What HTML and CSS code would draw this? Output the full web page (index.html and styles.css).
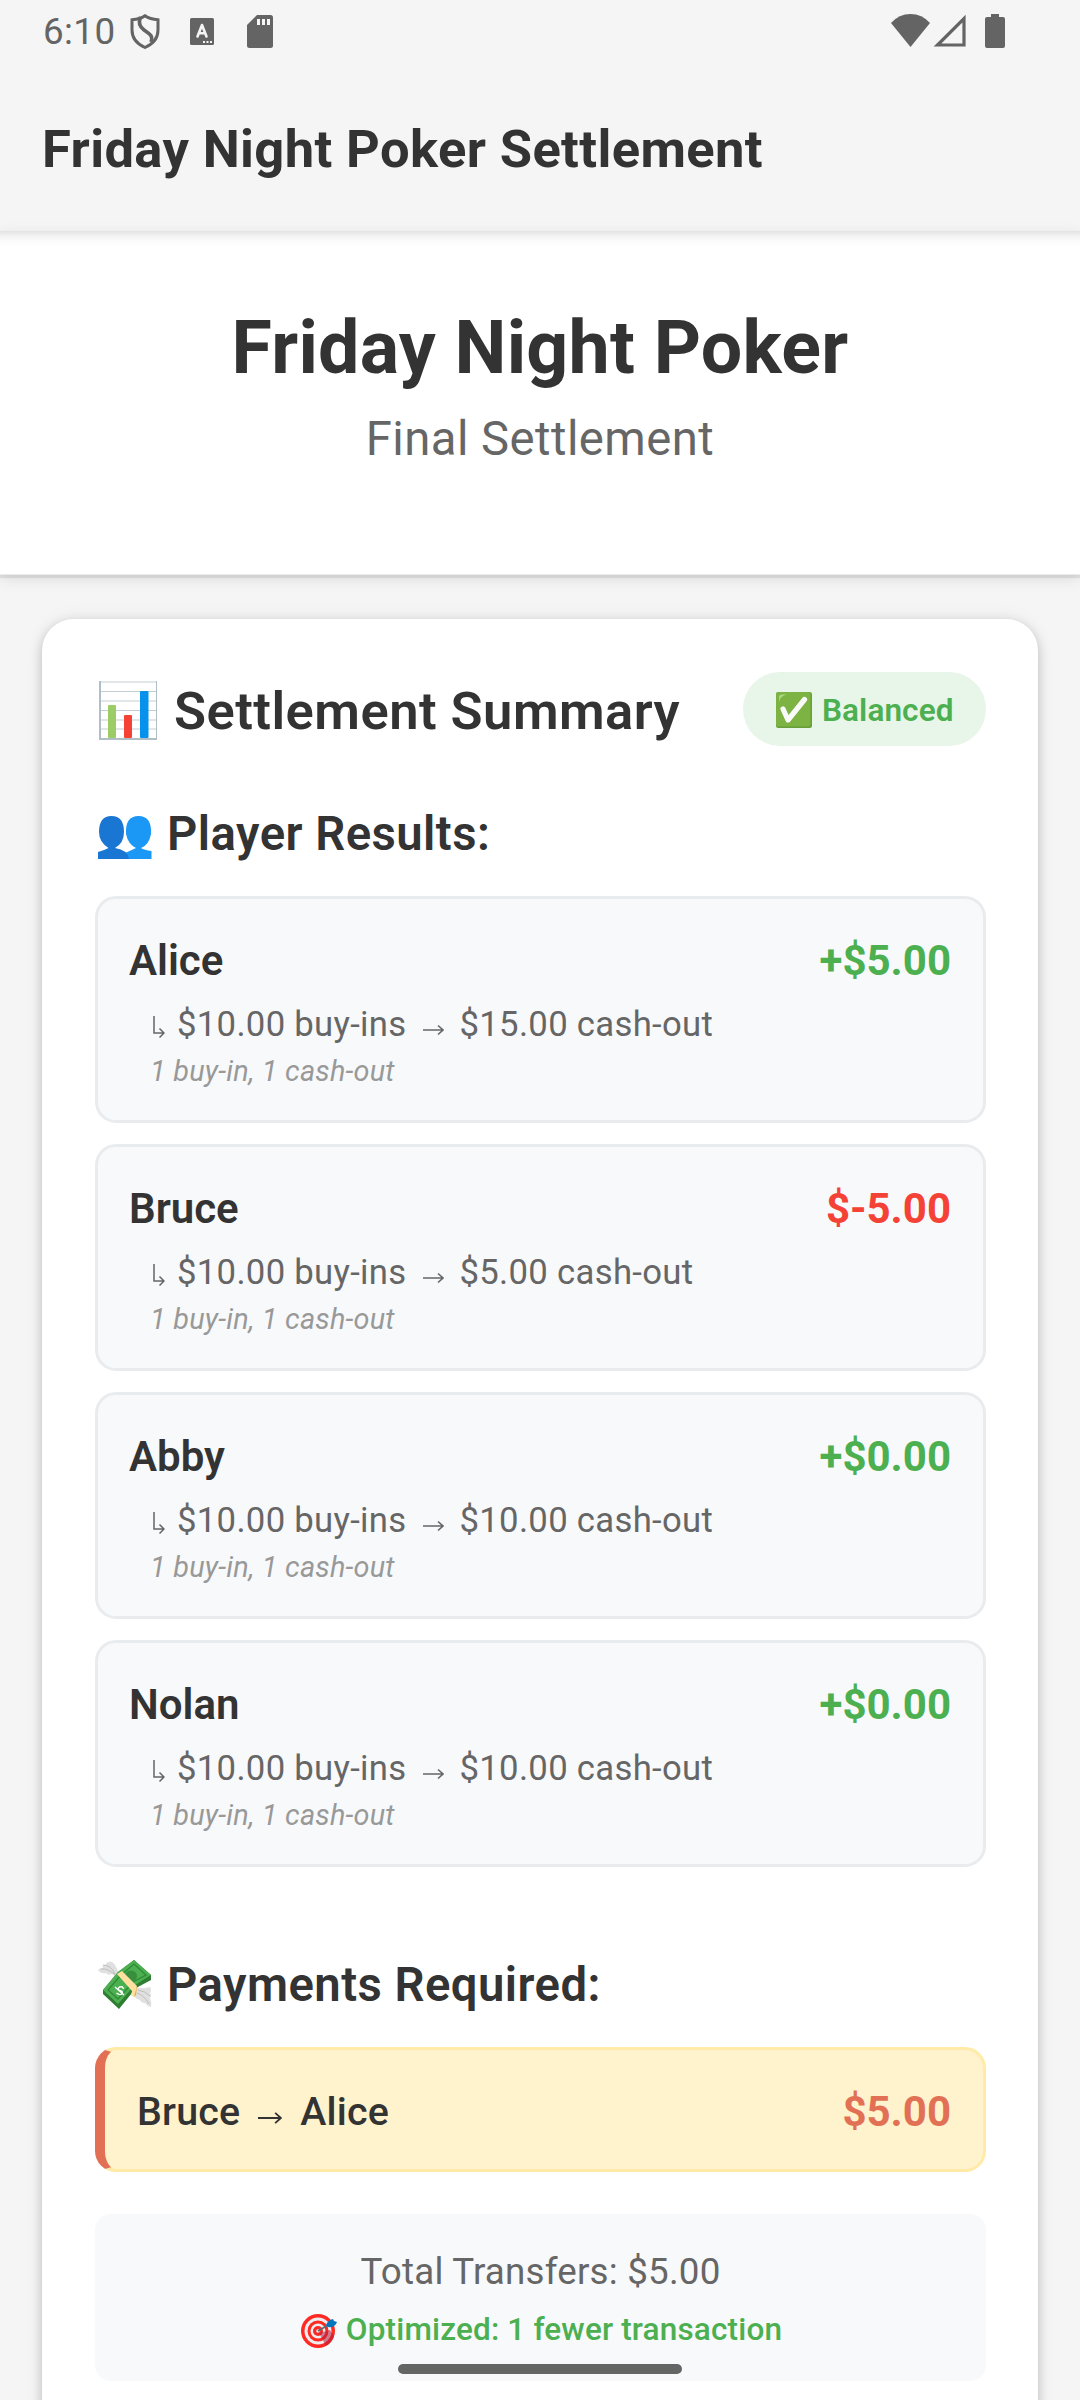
FILE: index.html
```html
<!DOCTYPE html>
<html lang="en">
<head>
<meta charset="utf-8">
<title>Friday Night Poker Settlement</title>
<link rel="stylesheet" href="styles.css">
</head>
<body>
<svg class="defs" width="0" height="0" aria-hidden="true">
  <symbol id="arrow" viewBox="0 0 21 12"><path d="M0 6H20M15 1.500L20 6L15 10.500" fill="none" stroke="currentColor" stroke-width="1.600"/></symbol>
  <symbol id="sub" viewBox="0 0 12 22"><path d="M1 0V17H10M6.5 12.5L11 17L6.5 21.5" fill="none" stroke="currentColor" stroke-width="1.5"/></symbol>
</svg>

<header class="statusbar">
  <span class="clock">6:10</span>
  <svg class="ic-shield" viewBox="0 0 30 36"><path d="M15 1.800C11 4.600 6.500 5.500 2 5.800V16C2 24 7 30 15 33.500C23 30 28 24 28 16V5.800C23.500 5.500 19 4.600 15 1.800Z" fill="none" stroke="#646464" stroke-width="3"/><path d="M10.500 3C8 9 10 13 14 16C19 19.500 23.500 21 21 28" fill="none" stroke="#646464" stroke-width="3.600"/></svg>
  <svg class="ic-a" viewBox="0 0 24 27"><rect width="24" height="27" rx="1.500" fill="#646464"/><path d="M7.500 18.500L12 7L16.500 18.500M9 15.300H15" fill="none" stroke="#f5f5f5" stroke-width="2.600" stroke-linecap="round" stroke-linejoin="round"/><path d="M13 23h2v2h-2zM16.500 23h2v2h-2zM20 23h2v2h-2z" fill="#f5f5f5"/></svg>
  <svg class="ic-sd" viewBox="0 0 26 33"><path d="M10 0H23.500Q26 0 26 2.500V30.500Q26 33 23.500 33H2.500Q0 33 0 30.500V10Z" fill="#646464"/><path d="M10 4h3v6h-3zM15 4h3v6h-3zM20 4h3v6h-3z" fill="#f5f5f5"/></svg>
  <svg class="ic-wifi" viewBox="0 0 39 33"><path d="M0 9Q8 0 19.500 0T39 9L19.500 33Z" fill="#646464"/></svg>
  <svg class="ic-signal" viewBox="0 0 33 33"><path d="M4.500 31H31V4.500Z" fill="none" stroke="#646464" stroke-width="3.200"/></svg>
  <svg class="ic-battery" viewBox="0 0 20 34"><path d="M6 0H14V3H18Q20 3 20 5V32Q20 34 18 34H2Q0 34 0 32V5Q0 3 2 3H6Z" fill="#646464"/></svg>
</header>
<div class="appbar">Friday Night Poker Settlement</div>
<section class="hero">
  <h1>Friday Night Poker</h1>
  <p>Final Settlement</p>
</section>

<main class="card">
  <div class="card-head">
    <svg class="em-chart" viewBox="0 0 58 59"><rect width="58" height="59" fill="#fff"/><path d="M1 1H58M1 10.500H58M1 20H58M1 29.500H58M1 39H58M1 48H58" stroke="#c3ced3" stroke-width="1.200"/><path d="M1 0V59M0 58H58" stroke="#b0bec5" stroke-width="2"/><path d="M57.500 0V59" stroke="#b0bec5"/><rect x="9" y="24" width="8" height="33" rx="1" fill="#9ccc65"/><rect x="25" y="34" width="8" height="23" rx="1" fill="#f44336"/><rect x="41" y="10" width="8.500" height="47" rx="1" fill="#0691ec"/></svg>
    <h2>Settlement Summary</h2>
    <span class="badge"><svg class="em-check" viewBox="0 0 36 36"><rect width="36" height="36" rx="2.500" fill="#689f38"/><rect width="34.500" height="34.500" rx="2.500" fill="#7cb342"/><path d="M3 10V5Q3 2.500 6 2.500H11Q4 4 3 10Z" fill="#aed581"/><path d="M7 17L12 28L28.500 7.500" fill="none" stroke="#fafafa" stroke-width="5.200" stroke-linecap="round" stroke-linejoin="round"/></svg><span>Balanced</span></span>
  </div>

  <h3 class="results-title"><svg class="em-people" viewBox="0 0 54 43"><path d="M27 43V37Q34 34 38 32Q30 28 28 18Q27 0 40.500 0T53 18Q51 29 43 32Q46 34 53.500 35V43Z" fill="#1b98f5"/><path d="M0 43V36Q7 34 10.500 32Q1 26 1 16Q1 0 13.500 0T26 16Q26 27 17 32Q30 34 31 43Z" fill="#1976d2"/></svg>Player Results:</h3>

  <div class="players">
    <article class="player"><div class="top"><span>Alice</span><b class="pos">+$5.00</b></div>
      <div class="detail"><svg class="i-sub"><use href="#sub"/></svg><span>$10.00 buy-ins</span><svg class="i-arrow"><use href="#arrow"/></svg><span>$15.00 cash-out</span></div><div class="note">1 buy-in, 1 cash-out</div></article>
    <article class="player"><div class="top"><span>Bruce</span><b class="neg">$-5.00</b></div>
      <div class="detail"><svg class="i-sub"><use href="#sub"/></svg><span>$10.00 buy-ins</span><svg class="i-arrow"><use href="#arrow"/></svg><span>$5.00 cash-out</span></div><div class="note">1 buy-in, 1 cash-out</div></article>
    <article class="player"><div class="top"><span>Abby</span><b class="pos">+$0.00</b></div>
      <div class="detail"><svg class="i-sub"><use href="#sub"/></svg><span>$10.00 buy-ins</span><svg class="i-arrow"><use href="#arrow"/></svg><span>$10.00 cash-out</span></div><div class="note">1 buy-in, 1 cash-out</div></article>
    <article class="player"><div class="top"><span>Nolan</span><b class="pos">+$0.00</b></div>
      <div class="detail"><svg class="i-sub"><use href="#sub"/></svg><span>$10.00 buy-ins</span><svg class="i-arrow"><use href="#arrow"/></svg><span>$10.00 cash-out</span></div><div class="note">1 buy-in, 1 cash-out</div></article>
  </div>

  <h3 class="pay-title"><svg class="em-money" viewBox="0 0 54 50"><path d="M22 17C19 8 17 3 13 1.500Q7 2 8 5Q3 5 5 8Q1 8 0 10Q3 14 8 13Q10 16 14 14Q17 17 22 17Z" fill="#e0e0e0"/><path d="M37 27Q45 29 52 27Q54 30 52 33Q54 35 52 38Q54 43 53 47Q49 46 47 43Q43 43 42 40Q38 39 36 36Z" fill="#e0e0e0"/><path d="M5 5Q13 5 17 14M3 9Q10 8 17 15M39 33Q46 35 51 44M40 30Q47 31 52 36" fill="none" stroke="#bdbdbd"/><path d="M5 30L20 12L36 0L53 15V20L38 28L21 49L5 34Z" fill="#2e7d32"/><path d="M5 30L20 12L36 0L53 15L37 25L20 44Z" fill="#4caf50"/><path d="M10 30L22 16L36 4L48 15L35 22L20 39Z" fill="none" stroke="#2e8b36" stroke-width="1.300"/><ellipse cx="33" cy="16" rx="6" ry="5.500" fill="#388e3c"/><path d="M19 14L24 11L39 26L36 37L33 35L34 31Z" fill="#ffe0a0"/><path d="M36 37L39 26L38 35Z" fill="#f9a825"/><path d="M25.500 29Q25 26 21.500 27Q19 29 21.500 30.500Q25 31 24.500 33.500Q22 36 18.500 33M17 27L26 35" fill="none" stroke="#fff" stroke-width="1.400"/></svg>Payments Required:</h3>
  <div class="payment"><span>Bruce</span><svg class="i-arrow"><use href="#arrow"/></svg><span>Alice</span><b>$5.00</b></div>

  <div class="totals">
    <div class="total">Total Transfers: $5.00</div>
    <div class="opt"><svg class="em-target" viewBox="0 0 36 35"><circle cx="17" cy="18" r="17" fill="#ff2a23"/><circle cx="17" cy="18" r="13.500" fill="#eee"/><circle cx="17" cy="18" r="10.500" fill="#ff2a23"/><circle cx="17" cy="18" r="7.500" fill="#eee"/><circle cx="17" cy="18" r="5" fill="#ff2a23"/><circle cx="17" cy="18" r="1.800" fill="#eee"/><path d="M18 20L29 17L33 23Q31 30 25 33Z" fill="#b71c3c" opacity=".55"/><path d="M17 18L29 11" stroke="#546e7a" stroke-width="1.600"/><path d="M25 12Q27 7 32 6L33 8L36 9Q34 15 27 14Z" fill="#0277bd"/></svg>Optimized: 1 fewer transaction</div>
  </div>
</main>
<div class="homebar"></div>
</body>
</html>
```
FILE: styles.css
```css
* { box-sizing: border-box; }
html, body { margin: 0; width: 1080px; height: 2400px; overflow: hidden; }
body { background: #f5f5f5; font-family: Roboto, sans-serif; color: #333; display: flex; flex-direction: column; position: relative; }
h1, h2, h3, p { margin: 0; }
svg { display: block; flex: none; }
.defs { position: absolute; }

.statusbar { height: 63px; display: flex; align-items: flex-start; padding-left: 43px; color: #646464; flex: none; }
.clock { font-size: 36.75px; line-height: 63px; width: 87px; white-space: nowrap; letter-spacing: .4px; }
.ic-shield { width: 30px; height: 36px; margin-top: 14px; }
.ic-a { width: 24px; height: 27px; margin: 18px 0 0 30px; }
.ic-sd { width: 26px; height: 33px; margin: 15px 0 0 33px; }
.ic-wifi { width: 39px; height: 33px; margin: 14px 0 0 auto; }
.ic-signal { width: 33px; height: 33px; margin: 14px 0 0 3px; }
.ic-battery { width: 20px; height: 34px; margin: 14px 75px 0 19px; }

.appbar { height: 168px; flex: none; padding: 0 42px; font-size: 52.5px; font-weight: 700; line-height: 172px; white-space: nowrap; letter-spacing: .38px; }
.hero { height: 344px; flex: none; background: linear-gradient(#e2e2e2, #f3f3f3 5px, #fbfbfb 10px, #fff 16px); text-align: center; padding-top: 74px; border-bottom: 1px solid #ebebeb; box-shadow: 0 3px 1px rgba(0,0,0,.08), 0 4px 14px rgba(0,0,0,.1); }
.hero h1 { font-size: 73.5px; line-height: 86px; font-weight: 700; letter-spacing: .25px; }
.hero p { font-size: 47.25px; line-height: 56px; color: #666; margin-top: 20px; letter-spacing: .45px; }

.card { margin: 44px 42px 0; flex: none; height: 1900px; border-radius: 31.5px; background: #fff; padding: 53px 52px 0 53px; box-shadow: 0 4px 12px rgba(0,0,0,.2), 0 0 20px rgba(0,0,0,.06); }
.card-head { display: flex; align-items: center; height: 74px; padding-left: 4px; }
.em-chart { width: 58px; height: 59px; margin-top: 3px; }
h2 { font-size: 52.5px; font-weight: 600; line-height: 74px; margin-left: 17px; padding-top: 3px; white-space: nowrap; letter-spacing: .48px; }
.badge { margin-left: auto; display: flex; align-items: center; width: 243px; height: 74px; border-radius: 37px; padding: 2px 0 0 33px; gap: 10px; background: #e8f5e9; color: #4caf50; font-size: 31.5px; font-weight: 600; letter-spacing: .1px; }
.em-check { width: 36px; height: 36px; }
h3 { display: flex; align-items: center; font-size: 47.25px; font-weight: 600; line-height: 56px; height: 56px; padding-left: 3px; white-space: nowrap; letter-spacing: .46px; }
.results-title { margin-top: 60px; }
.em-people { width: 54px; height: 43px; margin: 7px 15px 0 0; }
.em-money { width: 54px; height: 50px; margin: 0 15px 0 0; }

.players { display: flex; flex-direction: column; gap: 21px; margin-top: 34px; }
.player { height: 227px; border: 3px solid #e9ecef; border-radius: 21px; background: #f8f9fb; padding: 34px 32px 0 31px; }
.top { display: flex; justify-content: space-between; font-size: 42px; font-weight: 600; line-height: 56px; }
.top b { font-weight: 700; }
.pos { color: #4caf50; }
.neg { color: #f44336; }
.detail { display: flex; align-items: center; height: 48px; margin-top: 11px; padding-left: 24px; color: #666; font-size: 34.7px; line-height: 48px; white-space: nowrap; letter-spacing: .3px; }
.i-sub { width: 12px; height: 22px; margin: 5px 12px 0 0; }
.i-arrow { width: 21px; height: 12px; margin: 12px 16px 0; }
.note { padding-left: 21px; font-size: 28.875px; line-height: 40px; font-style: italic; color: #999; margin-top: 3px; letter-spacing: .2px; }

.pay-title { margin-top: 90px; }
.payment { margin-top: 34px; height: 125px; border: 3px solid #ffeaa7; border-left: 10.5px solid #e17055; border-radius: 21px; background: #fff3cd; display: flex; align-items: center; padding: 3px 32px 0; font-size: 39.375px; font-weight: 500; letter-spacing: .2px; }
.payment .i-arrow { width: 24px; height: 14px; margin: 14px 18px 0; }
.payment b { margin-left: auto; color: #e17055; font-size: 42px; font-weight: 700; letter-spacing: 0; }
.totals { margin-top: 42px; height: 167px; background: #f8f9fb; border-radius: 16px; text-align: center; padding-top: 33px; }
.total { color: #666; font-size: 36.75px; line-height: 50px; letter-spacing: .2px; }
.opt { display: flex; justify-content: center; align-items: center; gap: 9px; padding-left: 2px; color: #4caf50; font-size: 31.5px; line-height: 42px; font-weight: 500; margin-top: 12px; letter-spacing: .16px; }
.em-target { width: 36px; height: 35px; }
.homebar { position: absolute; left: 398px; top: 2364px; width: 284px; height: 10px; border-radius: 5px; background: #646666; }
```
